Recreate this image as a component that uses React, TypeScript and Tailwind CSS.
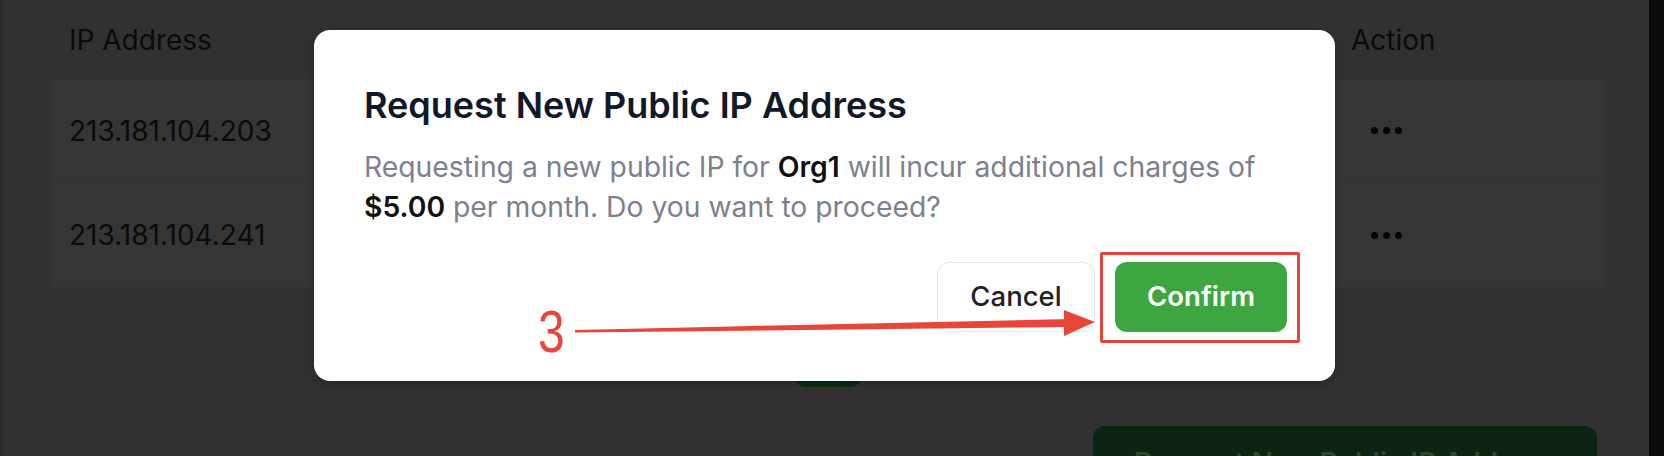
const ips = ['213.181.104.203', '213.181.104.241'];

function Dots() {
  return (
    <div className="ml-[20px] flex items-center gap-[5px]">
      <span className="h-[7px] w-[7px] rounded-full bg-[#050505]" />
      <span className="h-[7px] w-[7px] rounded-full bg-[#050505]" />
      <span className="h-[7px] w-[7px] rounded-full bg-[#050505]" />
    </div>
  );
}

export default function App() {
  return (
    <div className="relative flex h-[456px] w-[1664px] overflow-hidden bg-[#313131] font-['Inter','Liberation_Sans',sans-serif]">
      <div className="relative flex-1 border-l-[3px] border-[#2a2a2a]">
        {/* page behind the overlay */}
        <div className="ml-[49px] mr-[45px]">
          <div className="grid h-[79px] grid-cols-[1fr_270px] items-center text-[28px] text-[#0b0b0b]">
            <div className="pl-[17px]">IP Address</div>
            <div className="pl-[17px]">Action</div>
          </div>
          <div className="bg-[#353535]">
            {ips.map((ip, i) => (
              <div
                key={ip}
                className={`grid h-[104px] grid-cols-[1fr_270px] items-center text-[28px] text-[#0b0b0b] ${i === 0 ? 'border-b border-[#313131]' : ''}`}
              >
                <div className="pl-[17px]">{ip}</div>
                <div className="pl-[17px]">
                  <Dots />
                </div>
              </div>
            ))}
          </div>
          <div className="mt-[50px] flex justify-center">
            <div className="h-[50px] w-[66px] rounded-[10px] bg-[#0b2a14]" />
          </div>
          <div className="mt-[39px] flex justify-end pr-[7px]">
            <div className="flex h-[70px] w-[504px] items-start justify-center rounded-[12px] bg-[#0c2411] pt-[20px] text-[28px] font-semibold leading-[34px] text-[#2c4630]">
              Request New Public IP Address
            </div>
          </div>
        </div>

        {/* modal */}
        <div className="absolute left-[311px] top-[30px] flex h-[351px] w-[1021px] flex-col rounded-[16px] bg-white pl-[50px] pr-[48px] pt-[53px] shadow-[0_2px_6px_rgba(0,0,0,0.25)]">
          <h2 className="text-[36px] font-semibold leading-[44px] text-[#111827]">Request New Public IP Address</h2>
          <p className="mt-[20px] text-[28.3px] leading-[40px] text-[#7b818e]">
            Requesting a new public IP for <span className="font-semibold text-[#111111]">Org1</span> will incur additional charges of{' '}
            <span className="font-semibold text-[#111111]">$5.00</span> per month. Do you want to proceed?
          </p>
          <div className="mt-[35px] flex justify-end gap-[20px]">
            <button className="h-[70px] w-[158px] rounded-[12px] border border-[#e6e7ea] bg-white text-[27.5px] font-medium text-[#1f2126]">
              Cancel
            </button>
            <button className="h-[70px] w-[172px] rounded-[12px] bg-[#3da641] text-[27.5px] font-semibold text-white">
              Confirm
            </button>
          </div>
        </div>
      </div>
      <div className="w-[15px] bg-[#0b0b0b]" />

      {/* annotation */}
      <div className="pointer-events-none absolute left-[1100px] top-[252px] h-[91px] w-[200px] rounded-[2px] border-[3px] border-[#e5463b]" />
      <div className="pointer-events-none absolute left-[538px] top-[297px] origin-left scale-x-[0.8] font-['Liberation_Sans',sans-serif] text-[60px] leading-[70px] text-[#e8453b]">
        3
      </div>
      <svg className="pointer-events-none absolute left-0 top-0" width="1664" height="456">
        <polygon points="575,330 575,332.5 1070,327 1070,319" fill="#e8453b" />
        <polygon points="1064,310 1095,322 1064,336" fill="#e8453b" />
      </svg>
    </div>
  );
}
